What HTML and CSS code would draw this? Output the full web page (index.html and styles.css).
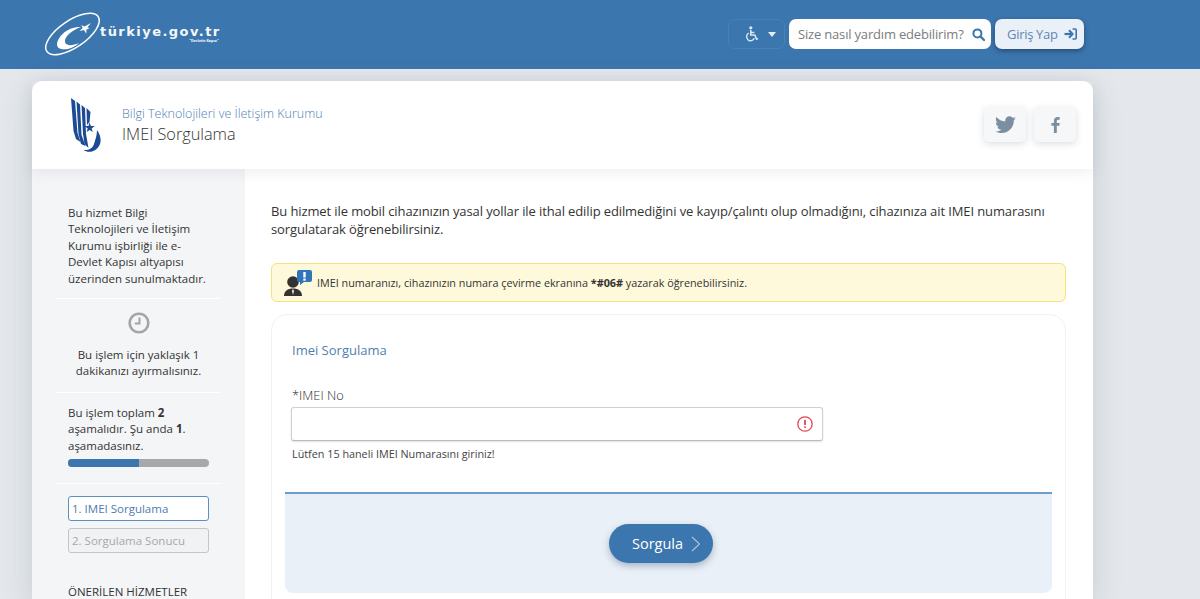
FILE: index.html
```html
<!DOCTYPE html>
<html lang="tr">
<head>
<meta charset="utf-8">
<title>IMEI Sorgulama</title>
<link rel="stylesheet" href="styles.css">
</head>
<body>
<header class="topbar">
  <a class="brand">
    <svg class="brand-mark" width="58" height="44" viewBox="0 0 58 44">
      <ellipse cx="28.5" cy="21" rx="31" ry="13.5" transform="rotate(-34 28.5 21)" fill="none" stroke="#fff" stroke-width="1.5"/>
      <path d="M13 32 C13 23 25 13 37 14 C28 17 20 24 21 29 C22 33 28 33 35 30 C28 37 14 39 13 32Z" fill="#fff"/>
      <path d="M47 10l-3.500 4.300 2 .9-3 1.200-.3 4.300-2.200-3.600-4.500.8 3.200-2.800-1.500-2.800 3.400 1.300z" fill="#fff"/>
    </svg>
    <span class="brand-text">
      <span class="brand-name">türkiye.gov.tr</span>
      <span class="brand-sub">"Devletin Kapısı"</span>
    </span>
  </a>
  <div class="top-actions">
    <button class="access-btn">
      <svg width="15" height="16" viewBox="0 0 15 16"><circle cx="6.800" cy="1.800" r="1.600" fill="#d9e7f5"/><path d="M6.800 4v5h4l1.800 4.200 1.400-.6" fill="none" stroke="#d9e7f5" stroke-width="1.600"/><path d="M6.800 6.500h3.600" stroke="#d9e7f5" stroke-width="1.400"/><path d="M4.700 7.200a4 4 0 1 0 5.600 5" fill="none" stroke="#d9e7f5" stroke-width="1.400"/></svg>
      <span class="caret"></span>
    </button>
    <div class="search">
      <span class="search-text">Size nasıl yardım edebilirim?</span>
      <svg width="13" height="13" viewBox="0 0 13 13"><circle cx="5.400" cy="5.400" r="4" fill="none" stroke="#3c76ae" stroke-width="2"/><path d="M8.400 8.400l3.600 3.600" stroke="#3c76ae" stroke-width="2.200" stroke-linecap="round"/></svg>
    </div>
    <button class="login">
      <span>Giriş Yap</span>
      <svg width="13" height="12" viewBox="0 0 13 12"><path d="M0.500 6h6.500" stroke="#3c76ae" stroke-width="2.200"/><path d="M5 2.200L8.600 6 5 9.800" fill="none" stroke="#3c76ae" stroke-width="2"/><path d="M8.500 1h2.700a1 1 0 0 1 1 1v8a1 1 0 0 1-1 1H8.500" fill="none" stroke="#3c76ae" stroke-width="1.600"/></svg>
    </button>
  </div>
</header>

<div class="wrap">
  <section class="org">
    <svg class="org-logo" width="32" height="54" viewBox="0 0 32 54">
      <g fill="#1c4a94">
        <path d="M1 0l4 3 2.500 32 3 9-4.500-3-2.500-8z"/>
        <path d="M6.500 3.500l3.500 3 1.500 30.500 4 11-4.500-2-2.500-10z"/>
        <path d="M11.500 7l3.500 3 1 26 2.500 14-4-4-1.500-10z"/>
        <path d="M16.500 10l4 4-1 10-2.500 3z"/>
        <path d="M19.500 24.500l1.400 3.500 3.800.1-3 2.300 1.100 3.600-3.100-2.100-3.100 2.100 1.100-3.600-3-2.300 3.800-.1z"/>
        <path d="M27 32c5 7 5 15-1 19.500-4 3-9 3-12.500.5 5 .5 9-1.500 10.500-6 1.500-4.500 3-9 3-14z"/>
      </g>
    </svg>
    <div class="org-titles">
      <div class="org-name">Bilgi Teknolojileri ve İletişim Kurumu</div>
      <h1 class="org-service">IMEI Sorgulama</h1>
    </div>
    <div class="social">
      <a class="social-btn"><svg width="21" height="18" viewBox="0 0 24 20"><path d="M24 2.400c-.9.400-1.800.7-2.800.8 1-.6 1.800-1.600 2.200-2.700-1 .6-2 1-3.100 1.200C19.300.7 18 0 16.600 0c-2.700 0-4.900 2.200-4.900 4.900 0 .4 0 .8.100 1.100C7.700 5.800 4.100 3.900 1.700.9c-.4.700-.7 1.600-.7 2.500 0 1.700.9 3.200 2.200 4.100-.8 0-1.600-.2-2.200-.6v.1c0 2.400 1.700 4.400 3.900 4.800-.4.100-.8.200-1.300.2-.3 0-.6 0-.9-.1.600 2 2.400 3.400 4.600 3.400-1.700 1.300-3.800 2.100-6.100 2.100-.4 0-.8 0-1.200-.1C2.200 18.300 4.800 19.100 7.500 19.100c9.100 0 14-7.500 14-14v-.6c1-.7 1.800-1.500 2.500-2.100z" fill="#7b8fa1"/></svg></a>
      <a class="social-btn"><svg width="9" height="16" viewBox="0 0 9 16"><path d="M5.800 16V8.800h2.500l.4-2.800H5.800V4.200c0-.8.200-1.400 1.400-1.400h1.500V.3C8.400.2 7.600.1 6.600.1 4.400.1 2.900 1.400 2.900 3.900V6H.4v2.800h2.500V16z" fill="#7b8fa1"/></svg></a>
    </div>
  </section>

  <div class="columns">
    <aside class="side">
      <p class="side-intro">Bu hizmet Bilgi Teknolojileri ve İletişim Kurumu işbirliği ile e-Devlet Kapısı altyapısı üzerinden sunulmaktadır.</p>
      <div class="side-time">
        <svg width="22" height="22" viewBox="0 0 22 22"><circle cx="11" cy="11" r="9.300" fill="none" stroke="#a3a5a8" stroke-width="2.600"/><path d="M11.500 5.500v6H6.800" fill="none" stroke="#a3a5a8" stroke-width="2"/></svg>
        <p>Bu işlem için yaklaşık 1 dakikanızı ayırmalısınız.</p>
      </div>
      <div class="side-progress">
        <p>Bu işlem toplam <b>2</b> aşamalıdır. Şu anda <b>1</b>. aşamadasınız.</p>
        <div class="bar"><div class="bar-fill"></div></div>
      </div>
      <ol class="steps">
        <li class="step step-active">1. IMEI Sorgulama</li>
        <li class="step step-off">2. Sorgulama Sonucu</li>
      </ol>
      <h2 class="side-heading">ÖNERİLEN HİZMETLER</h2>
    </aside>

    <main class="main">
      <p class="lead">Bu hizmet ile mobil cihazınızın yasal yollar ile ithal edilip edilmediğini ve kayıp/çalıntı olup olmadığını, cihazınıza ait IMEI numarasını sorgulatarak öğrenebilirsiniz.</p>
      <div class="notice">
        <svg width="30" height="28" viewBox="0 0 30 28"><circle cx="10" cy="13" r="5.800" fill="#333"/><path d="M1 27c0-5 3.500-7.500 9-7.500S19 22 19 27z" fill="#333"/><path d="M10 20l-1 2 1 4 1-4z" fill="#fff6d0"/><path d="M16 1h11a2 2 0 0 1 2 2v8a2 2 0 0 1-2 2h-6l-4 3v-3h-1a2 2 0 0 1-2-2V3a2 2 0 0 1 2-2z" fill="#2f76b8"/><rect x="20.300" y="3" width="2.400" height="5.500" fill="#fff"/><rect x="20.300" y="9.500" width="2.400" height="2.200" fill="#fff"/></svg>
        <span>IMEI numaranızı, cihazınızın numara çevirme ekranına <b>*#06#</b> yazarak öğrenebilirsiniz.</span>
      </div>
      <form class="card">
        <h2 class="card-title">Imei Sorgulama</h2>
        <label class="field-label"><span class="req">*</span>IMEI No</label>
        <div class="input">
          <svg width="16" height="16" viewBox="0 0 16 16"><circle cx="8" cy="8" r="7.200" fill="none" stroke="#e5434f" stroke-width="1.300"/><rect x="7.100" y="3.800" width="1.800" height="5.200" rx=".6" fill="#e5434f"/><rect x="7.100" y="10.200" width="1.800" height="1.900" rx=".6" fill="#e5434f"/></svg>
        </div>
        <p class="hint">Lütfen 15 haneli IMEI Numarasını giriniz!</p>
        <div class="actions">
          <button class="submit" type="button">
            <span>Sorgula</span>
            <svg width="10" height="16" viewBox="0 0 10 16"><path d="M1 1l7.500 7L1 15" fill="none" stroke="#a9c6e2" stroke-width="1.100"/></svg>
          </button>
        </div>
      </form>
    </main>
  </div>
</div>
</body>
</html>
```
FILE: styles.css
```css
* { box-sizing: border-box; }
html, body { height: 599px; overflow: hidden; }
body {
  margin: 0;
  background: #e4e8ec;
  color: #333;
  font-family: "Open Sans", "Noto Sans", sans-serif;
  font-size: 12px;
}
p, h1, h2, ol { margin: 0; padding: 0; font-weight: 400; }
ol { list-style: none; }
button { font-family: inherit; border: 0; cursor: pointer; }

.topbar {
  height: 69px;
  background: #3c76ae;
  display: flex;
  justify-content: space-between;
  padding: 13px 116px 0 44px;
}
.brand { display: flex; align-items: flex-start; }
.brand-mark { display: block; overflow: visible; margin-right: -2px; }
.brand-text { display: flex; flex-direction: column; align-items: flex-end; padding-top: 12px; color: #fff; }
.brand-name {
  font-family: "DejaVu Sans", sans-serif;
  font-weight: 700;
  font-size: 13px;
  line-height: 14px;
  letter-spacing: 1.450px;
  color: #f4f7fa;
}
.brand-sub { font-size: 3.500px; line-height: 4px; font-weight: 700; margin-right: 2px; }

.top-actions { display: flex; gap: 4px; height: 30px; margin-top: 6px; }
.access-btn {
  width: 57px;
  background: #3c76ae;
  border: 1px solid #4a80b5;
  border-radius: 7px;
  display: flex;
  align-items: center;
  gap: 9px;
  padding: 0 0 0 15px;
}
.caret { width: 0; height: 0; border: 4.500px solid transparent; border-top: 5px solid #e4edf6; border-bottom: 0; }
.search {
  width: 202px;
  background: #fff;
  border-radius: 7px;
  display: flex;
  align-items: center;
  justify-content: space-between;
  padding: 0 6px 0 9px;
  color: #7a7d80;
  font-size: 13px;
  letter-spacing: -0.180px;
  white-space: nowrap;
}
.login {
  width: 89px;
  background: #eaf0f7;
  border-radius: 7px;
  box-shadow: 0 2px 5px rgba(20, 40, 70, .55);
  display: flex;
  align-items: center;
  gap: 6px;
  padding: 0 0 0 12px;
  color: #5f87b5;
  font-size: 13px;
  letter-spacing: -0.300px;
}

.wrap {
  width: 1061px;
  margin: 12px 0 0 32px;
  background: #fff;
  border-radius: 10px 10px 0 0;
  box-shadow: 0 8px 30px rgba(70, 85, 100, .18);
}
.org {
  height: 88px;
  display: flex;
  align-items: center;
  padding: 0 17px 0 38px;
  position: relative;
  box-shadow: 0 3px 14px rgba(70, 85, 100, .10);
}
.org-logo { display: block; }
.org-titles { margin-left: 20px; flex: 1; }
.org-name { font-size: 12.500px; line-height: 19px; font-weight: 300; color: #4f7fb5; }
.org-service { font-size: 16.300px; line-height: 23px; font-weight: 300; color: #333; }
.social { display: flex; gap: 8px; margin-top: -1px; }
.social-btn {
  width: 42px;
  height: 35px;
  background: #f5f7f9;
  border-radius: 5px;
  box-shadow: 0 2px 7px rgba(60, 70, 90, .18);
  display: flex;
  align-items: center;
  justify-content: center;
}

.columns { display: flex; height: 430px; overflow: hidden; }
.side {
  width: 213px;
  flex: none;
  background: #f4f5f7;
  padding: 36px 24px 0;
  color: #333;
  font-size: 11.500px;
  line-height: 16.400px;
}
.side-intro {
  margin: 0 0 0 12px;
  width: 141px;
  padding-bottom: 11px;
}
.side-time {
  border-top: 1px solid #fff;
  text-align: center;
  padding: 13px 0 12px;
}
.side-time svg { display: block; margin: 0 auto 13px; }
.side-progress {
  border-top: 1px solid #fff;
  border-bottom: 1px solid #fff;
  padding: 12px 12px 16px;
}
.bar {
  height: 8px;
  background: #a6a9ac;
  border-radius: 4px;
  overflow: hidden;
  margin-top: 5px;
}
.bar-fill { width: 50%; height: 100%; background: #3c76ae; }
.steps { padding: 12px 12px 0; }
.step {
  height: 25px;
  border: 1px solid;
  border-radius: 3px;
  padding-left: 3px;
  line-height: 23px;
  margin-bottom: 7px;
}
.step-active { background: #fff; border-color: #5f8fc0; color: #4e7cae; }
.step-off { background: #f1f2f4; border-color: #c3c5c7; color: #a6a8aa; }
.side-heading {
  margin: 30px 0 0 12px;
  font-size: 11.500px;
  line-height: 17px;
}

.main { flex: 1; padding: 33px 27px 0 26px; min-width: 0; }
.lead { font-size: 13px; line-height: 18px; letter-spacing: -0.110px; color: #333; }
.notice {
  height: 39px;
  margin-top: 25px;
  background: #fff9dc;
  border: 1px solid #f5e27a;
  border-radius: 6px;
  display: flex;
  align-items: center;
  gap: 4px;
  padding: 0 11px;
  font-size: 10.800px;
  color: #333;
}
.card {
  margin-top: 12px;
  height: 320px;
  border: 1px solid #f1f2f4;
  border-radius: 16px;
  padding: 25px 13px 0;
}
.card-title { margin-left: 7px; font-size: 13px; line-height: 20px; color: #4f7fae; }
.field-label { display: block; margin: 26px 0 0 7px; font-size: 12.800px; line-height: 19px; font-weight: 300; color: #333; }
.req { color: #333; }
.input {
  width: 532px;
  height: 34px;
  margin: 2px 0 0 6px;
  background: #fff;
  border: 1px solid #cfd0d2;
  border-bottom-color: #bbb;
  border-radius: 3px;
  box-shadow: 0 1px 2px rgba(0, 0, 0, .12);
  display: flex;
  align-items: center;
  justify-content: flex-end;
  padding-right: 9px;
}
.hint { margin: 4px 0 0 7px; font-size: 10.800px; line-height: 17px; color: #444; }
.actions {
  margin-top: 30px;
  height: 101px;
  background: #eaf0f7;
  border-top: 2px solid #6c9ecb;
  border-radius: 0 0 8px 8px;
  display: flex;
  align-items: center;
  justify-content: center;
  padding-right: 15px;
}
.submit {
  width: 104px;
  height: 39px;
  background: #3c76ae;
  border-radius: 20px;
  color: #fff;
  font-size: 14.500px;
  display: flex;
  align-items: center;
  gap: 8px;
  padding: 0 0 0 23px;
  box-shadow: 0 3px 7px rgba(40, 70, 110, .35);
}
```
